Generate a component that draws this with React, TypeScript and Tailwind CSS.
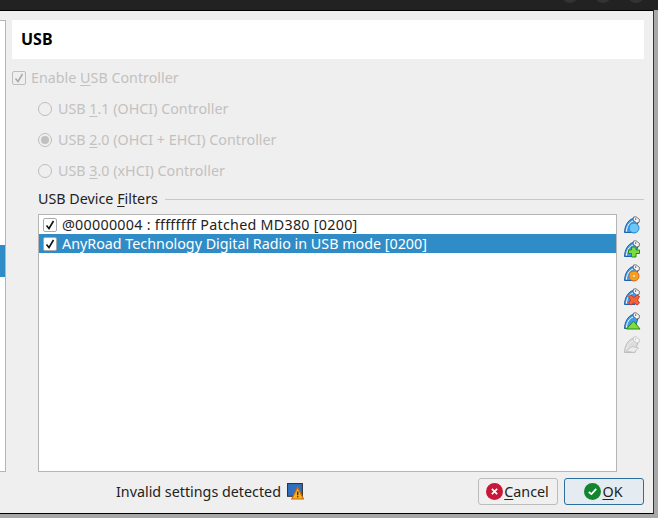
const font = { fontFamily: '"Noto Sans", sans-serif' };

function U({ children }: { children: string }) {
  return <span className="underline underline-offset-2 decoration-1">{children}</span>;
}

function Radio({ checked, children }: { checked?: boolean; children: React.ReactNode }) {
  return (
    <div className="flex items-center h-[31px] pl-[38px] text-[#c3c1bf]">
      <span className="w-[14px] h-[14px] rounded-full border border-[#bdbdbd] flex items-center justify-center mr-[6px]">
        {checked && <span className="w-[8px] h-[8px] rounded-full bg-[#c0c0c0]" />}
      </span>
      <span>{children}</span>
    </div>
  );
}

function Check() {
  return (
    <span className="w-[14px] h-[14px] bg-white border border-[#aaa] rounded-[2px] flex items-center justify-center shrink-0">
      <svg width="10" height="10" viewBox="0 0 10 10">
        <path d="M1.5 5.5 L4 8.5 L8.5 1" fill="none" stroke="#111" strokeWidth="1.6" />
      </svg>
    </span>
  );
}

function UsbIcon({ kind }: { kind: string }) {
  const grey = kind === "off";
  const fill = grey ? "#dcdcdc" : "#3f9be8";
  const line = grey ? "#bdbdbd" : "#1c62ad";
  return (
    <svg width="18" height="18" viewBox="0 0 18 18">
      {/* cable body */}
      <path d="M1.5 16.5 C1.5 11 4.5 4 10 2.5 L15 6 L12 16.5 Z" fill={fill} stroke={line} strokeWidth="1" />
      <path d="M3.5 15.5 C3.5 11 6 6.5 10 5" fill="none" stroke={grey ? "#eee" : "#ffffff"} strokeWidth="1" />
      {/* plug */}
      <path d="M10.5 1 L13 0.8 L16.5 3.5 L16 6.5 L13.5 7 L10 4 Z" fill="#f5f5f5" stroke={grey ? "#bdbdbd" : "#555"} strokeWidth="0.8" />
      <rect x="12" y="2.5" width="1.2" height="1.2" fill={grey ? "#bbb" : "#444"} />
      {kind === "filter" && <circle cx="11" cy="12" r="5" fill="#6cc6f7" stroke="#2a86d0" strokeWidth="1" />}
      {kind === "add" && <path d="M8.5 7 H13 V10 H16.5 V13.5 H13 V17 H8.5 V13.5 H5.5 V10 H8.5 Z" fill="#7ddc42" stroke="#2d8a12" strokeWidth="1" />}
      {kind === "edit" && (
        <>
          <circle cx="11" cy="12" r="5" fill="#f9a11f" stroke="#d9661a" strokeWidth="1" />
          <circle cx="11" cy="12" r="1.8" fill="#ffe27a" stroke="#d9661a" strokeWidth="0.5" />
        </>
      )}
      {kind === "del" && <path d="M5.5 8.5 L8 7 L11 9.5 L14 7 L16.5 8.5 L14.5 12 L16.5 15 L14 17 L11 14.5 L8 17 L5.5 15 L7.5 12 Z" fill="#f2633c" stroke="#c93a20" strokeWidth="1" />}
      {kind === "up" && <path d="M3.5 17 L10.5 9 L17 17 Z" fill="#7ddc42" stroke="#2d8a12" strokeWidth="1" />}
      {kind === "off" && <path d="M3 15 L9 10.5 L15.5 12 L11 16.5 Z" fill="#ececec" stroke="#bdbdbd" strokeWidth="0.8" />}
    </svg>
  );
}

export default function App() {
  return (
    <div className="w-[658px] h-[518px] flex flex-col overflow-hidden bg-[#a8a8a8] text-[14.3px] leading-[20px]" style={font}>
      <div className="h-[10px] shrink-0 bg-[#222222] overflow-hidden flex justify-end gap-[17px] pr-[14px]">
        <span className="w-[16px] h-[16px] rounded-full bg-[#333333] -mt-[13px]" />
        <span className="w-[16px] h-[16px] rounded-full bg-[#333333] -mt-[13px]" />
        <span className="w-[16px] h-[16px] rounded-full bg-[#333333] -mt-[13px]" />
      </div>
      <div className="h-[504px] shrink-0 w-[654px] flex border-y border-black border-r border-r-[#333] bg-[#efefef]">
        {/* left list, mostly cut off */}
        <div className="w-[6px] shrink-0 h-[452px] mt-[9px] bg-white border-y border-r border-[#b5b5b5] pt-[224px]">
          <div className="h-[32px] bg-[#308cc6]" />
        </div>

        <div className="flex-1 min-w-0 pl-[6px] pr-[9px] pt-[9px] flex flex-col">
          <div className="h-[39px] bg-white flex items-center pl-[9px] pb-[2px] font-bold text-[16px] text-black shrink-0">USB</div>

          <div className="flex items-center h-[20px] mt-[9px] text-[#c3c1bf]">
            <span className="w-[14px] h-[14px] border border-[#bdbdbd] rounded-[2px] flex items-center justify-center mr-[5px]">
              <svg width="10" height="10" viewBox="0 0 10 10">
                <path d="M1.5 5.5 L4 8.5 L8.5 1" fill="none" stroke="#aaa" strokeWidth="1.6" />
              </svg>
            </span>
            <span>Enable <U>U</U>SB Controller</span>
          </div>

          <div className="-ml-[12px] mt-[5px]">
            <Radio>USB <U>1</U>.1 (OHCI) Controller</Radio>
            <Radio checked>USB <U>2</U>.0 (OHCI + EHCI) Controller</Radio>
            <Radio>USB <U>3</U>.0 (xHCI) Controller</Radio>
          </div>

          <div className="flex items-center ml-[26px] mt-[3px] h-[20px] text-[#222]">
            <span>USB Device <U>F</U>ilters</span>
            <span className="flex-1 h-px bg-[#c8c8c8] ml-[7px]" />
          </div>

          <div className="flex ml-[26px] mt-[5px]">
            <div className="w-[579px] h-[258px] bg-white border border-[#b5b5b5] shrink-0 text-[#222]">
              <div className="h-[19px] flex items-center pl-[4px] gap-[5px]">
                <Check />
                <span className="tracking-[0.27px]">@00000004 : ffffffff Patched MD380 [0200]</span>
              </div>
              <div className="h-[19px] flex items-center pl-[4px] gap-[5px] bg-[#308cc6] text-white">
                <Check />
                <span>AnyRoad Technology Digital Radio in USB mode [0200]</span>
              </div>
            </div>
            <div className="flex flex-col items-center gap-[6px] ml-[6px] mt-[2px]">
              <UsbIcon kind="filter" />
              <UsbIcon kind="add" />
              <UsbIcon kind="edit" />
              <UsbIcon kind="del" />
              <UsbIcon kind="up" />
              <UsbIcon kind="off" />
            </div>
          </div>

          <div className="flex items-center mt-[6px] h-[27px]">
            <span className="ml-[104px] text-[#222]">Invalid settings detected</span>
            <svg width="17" height="17" viewBox="0 0 16 16" className="ml-[6px]">
              <rect x="0.5" y="0.5" width="14" height="12" fill="#2f6fc0" stroke="#333" />
              <path d="M10 4 L15.5 15 H4.5 Z" fill="#f9b21d" stroke="#c9660f" />
              <rect x="9.5" y="8" width="1.2" height="3.5" fill="#222" />
              <rect x="9.5" y="12.3" width="1.2" height="1.2" fill="#222" />
            </svg>
            <div className="flex-1" />
            <button className="w-[80px] h-[27px] rounded-[3px] border border-[#bcbcbc] bg-[#f0f0f0] flex items-center justify-center gap-[1px] pr-[1px] text-[#222]">
              <svg width="17" height="17" viewBox="0 0 16 16">
                <circle cx="8" cy="8" r="8" fill="#c9173a" />
                <path d="M5.5 5.5 L10.5 10.5 M10.5 5.5 L5.5 10.5" stroke="#fff" strokeWidth="1.6" />
              </svg>
              <span><U>C</U>ancel</span>
            </button>
            <button className="w-[80px] h-[27px] ml-[6px] rounded-[3px] border border-[#2c6e9e] bg-[#e4ebf1] flex items-center justify-center gap-[1px] pr-[1px] text-[#222]">
              <svg width="17" height="17" viewBox="0 0 16 16">
                <circle cx="8" cy="8" r="8" fill="#14852f" />
                <path d="M4.5 8.5 L7 10.5 L11.5 5.5" fill="none" stroke="#fff" strokeWidth="1.6" />
              </svg>
              <span><U>O</U>K</span>
            </button>
          </div>
        </div>
      </div>
    </div>
  );
}
